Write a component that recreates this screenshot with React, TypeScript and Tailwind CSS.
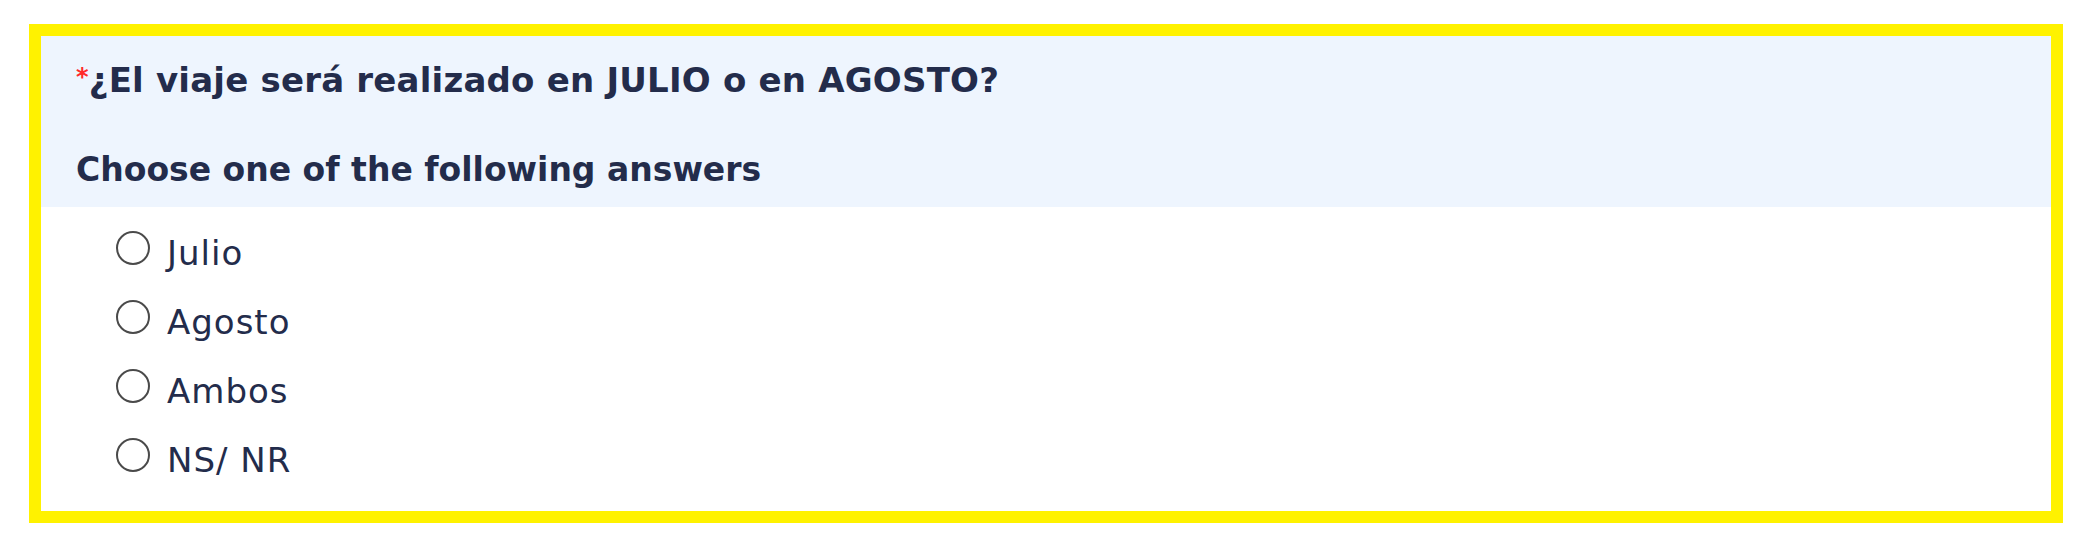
const options = ["Julio", "Agosto", "Ambos", "NS/ NR"];

export default function App() {
  return (
    <div className="h-[554px] w-[2092px] bg-white pt-[24px] pb-[31px] pl-[29px] pr-[29px] font-['DejaVu_Sans',Verdana,sans-serif] text-[#232c4b]">
      <div className="h-full border-[12px] border-[#fff200] bg-white">
        <div className="bg-[#eef5fe] px-[35px] pt-[18px] pb-[14px]">
          <div className="text-[34px] leading-[46px] font-bold tracking-[0.2px]">
            <span className="text-[24px] align-[7px] text-[#ff2a2a]">*</span>
            ¿El viaje será realizado en JULIO o en AGOSTO?
          </div>
          <div className="mt-[44px] text-[33px] leading-[46px] font-bold">
            Choose one of the following answers
          </div>
        </div>
        <ul className="pt-[11px] pl-[75px]">
          {options.map((opt) => (
            <li key={opt} className="flex h-[69px] items-center gap-[17px]">
              <span className="-mt-[10px] h-[34px] w-[34px] rounded-full border-[2.5px] border-[#4a4a4a]" />
              <span className="text-[34px] leading-[46px] tracking-[1px]">{opt}</span>
            </li>
          ))}
        </ul>
      </div>
    </div>
  );
}
